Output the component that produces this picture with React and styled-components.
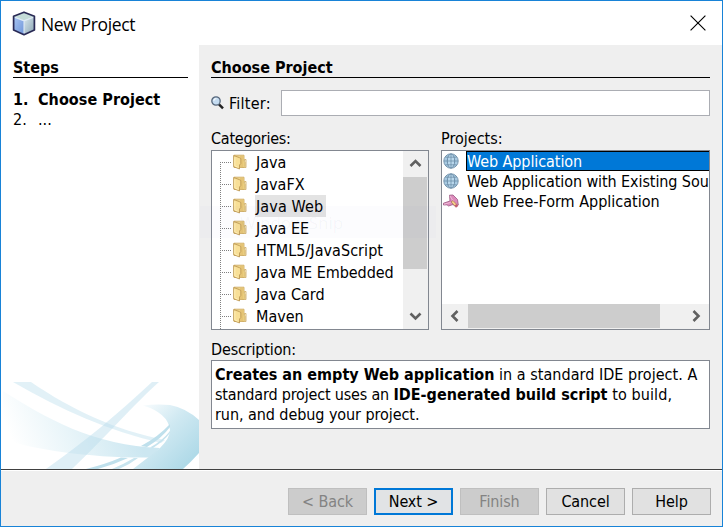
import React from "react";
import styled, { createGlobalStyle, css } from "styled-components";

const GlobalStyle = createGlobalStyle`
  *, *::before, *::after { box-sizing: border-box; }
  body { margin: 0; overflow: hidden; }
`;

const Window = styled.div`
  position: relative;
  display: flex;
  flex-direction: column;
  width: 723px;
  height: 527px;
  border: 1px solid #1883d7;
  background: #efefef;
  color: #000;
  font: 16px/20px "DejaVu Sans Condensed", "DejaVu Sans", sans-serif;
  white-space: nowrap;
`;

const TitleBar = styled.header`
  display: flex;
  align-items: center;
  flex: 0 0 44px;
  padding: 0 16px 0 11px;
  background: #fff;
`;

const Title = styled.h1`
  flex: 1;
  margin: 2px 0 0 5px;
  font: 400 17.5px/24px "Open Sans", "Noto Sans", sans-serif;
  letter-spacing: -0.38px;
`;

const CloseButton = styled.button`
  display: flex;
  padding: 0;
  border: 0;
  background: none;
`;

const Body = styled.div`
  display: flex;
  flex: 0 0 424px;
`;

const StepsPanel = styled.aside`
  display: flex;
  flex-direction: column;
  justify-content: space-between;
  width: 198px;
  padding-top: 12px;
  background: #fff;
`;

const Heading = styled.h2`
  height: 21px;
  margin: 0;
  border-bottom: 1px solid #000;
  font-size: 16px;
  line-height: 22px;
`;

const StepsTop = styled.div`
  margin: 0 11px 0 12px;
`;

const StepList = styled.ol`
  margin: 12px 0 0;
  padding: 0;
  list-style: none;
`;

const Step = styled.li`
  display: grid;
  grid-template-columns: 25px 1fr;
  font-weight: ${(p) => (p.$current ? 700 : 400)};
  letter-spacing: ${(p) => (p.$current ? "0.05px" : "0")};
`;

const SwirlArt = styled.svg`
  display: block;
`;

const Content = styled.main`
  display: flex;
  flex-direction: column;
  flex: 1;
  padding: 12px 12px 0;
`;

const FilterRow = styled.div`
  display: flex;
  align-items: center;
  height: 26px;
  margin-top: 12px;
`;

const FilterLabel = styled.label`
  width: 52px;
  margin-left: 5px;
  line-height: 18px;
  padding-top: 2px;
  letter-spacing: 0.25px;
`;

const FilterInput = styled.input`
  flex: 1;
  min-width: 0;
  height: 26px;
  border: 1px solid #abadb3;
  border-radius: 0;
  background: #fff;
  font: inherit;
`;

const Lists = styled.div`
  display: grid;
  grid-template-columns: 218px 269px;
  column-gap: 12px;
  margin-top: 12px;
`;

const FieldLabel = styled.div`
  height: 22px;
  line-height: 22px;
  letter-spacing: ${(p) => p.$spacing || "0"};
`;

const Box = styled.div`
  display: flex;
  height: 180px;
  overflow: hidden;
  border: 1px solid #828790;
  background: #fff;
  flex-direction: ${(p) => (p.$column ? "column" : "row")};
`;

const Tree = styled.ul`
  position: relative;
  flex: 1;
  margin: 0;
  padding: 0 0 0 8px;
  list-style: none;

  &::before {
    content: "";
    position: absolute;
    left: 8px;
    top: 11px;
    bottom: 0;
    width: 1px;
    background: repeating-linear-gradient(#808080 0 1px, transparent 1px 2px);
  }
`;

const TreeItem = styled.li`
  display: flex;
  align-items: center;
  height: 22px;

  &::before {
    content: "";
    width: 11px;
    height: 1px;
    margin-right: 2px;
    background: repeating-linear-gradient(90deg, #808080 0 1px, transparent 1px 2px);
  }
`;

const TreeLabel = styled.span`
  height: 22px;
  margin-left: 8px;
  padding: 0 3px 0 1px;
  line-height: 24px;
  letter-spacing: ${(p) => p.$spacing || "0"};
  background: ${(p) => (p.$selected ? "#e3e3e3" : "transparent")};
`;

const ScrollTrack = styled.div`
  display: flex;
  align-items: center;
  background: #f0f0f0;
  ${(p) =>
    p.$horizontal
      ? css`
          height: 25px;
          padding-bottom: 1px;
        `
      : css`
          flex-direction: column;
          width: 25px;
          padding-right: 1px;
        `}
`;

const ScrollArrow = styled.span`
  display: flex;
  align-items: center;
  justify-content: center;
  flex: 0 0 26px;
  width: 26px;
`;

const ScrollThumb = styled.span`
  background: #cdcdcd;
  ${(p) =>
    p.$horizontal
      ? css`
          width: 192px;
          height: 24px;
          margin-right: auto;
        `
      : css`
          width: 24px;
          height: 92px;
          margin-bottom: auto;
        `}
`;

const ProjectList = styled.ul`
  flex: 1;
  margin: 0;
  padding: 0;
  list-style: none;
`;

const ProjectItem = styled.li`
  display: flex;
  align-items: center;
  height: 20px;
  padding-left: 1px;
`;

const ProjectLabel = styled.span`
  flex: 1;
  height: 20px;
  margin-left: 7px;
  padding-left: 1px;
  line-height: 22px;
  letter-spacing: ${(p) => p.$spacing};
  ${(p) =>
    p.$selected &&
    css`
      border: 1px solid #000;
      border-right: 0;
      padding-left: 0;
      line-height: 20px;
      background: #0078d7;
      color: #fff;
    `}
`;

const DescriptionLabel = styled(FieldLabel)`
  margin-top: 9px;
  height: 21px;
  line-height: 22px;
`;

const Description = styled.p`
  height: 69px;
  margin: 0;
  padding: 4px 3px 0;
  border: 1px solid #828790;
  background: #fff;
`;

const Line = styled.span`
  display: block;
`;

const Run = styled.span`
  letter-spacing: ${(p) => p.$spacing};
`;

const Footer = styled.footer`
  display: flex;
  flex: 1;
  align-items: flex-start;
  justify-content: flex-end;
  gap: 7px;
  padding: 17px 11px 0;
  border-top: 1px solid #404040;
  box-shadow: inset 0 1px #fff;
`;

const variants = {
  normal: css`
    border: 1px solid #adadad;
    background: #e1e1e1;
    color: #000;
  `,
  primary: css`
    border: 2px solid #0078d7;
    background: #e1e3e5;
    color: #000;
  `,
  disabled: css`
    border: 1px solid #bfbfbf;
    background: #cccccc;
    color: #838383;
  `,
};

const Button = styled.button`
  display: flex;
  align-items: center;
  justify-content: center;
  width: 79px;
  height: 27px;
  margin-top: 1px;
  padding: 0;
  border-radius: 0;
  font: inherit;
  letter-spacing: -0.1px;
  ${(p) => variants[p.$variant]}
`;

const SnipGhost = styled.div`
  position: absolute;
  left: 199px;
  top: 205px;
  width: 236px;
  height: 32px;
  padding-left: 40px;
  background: rgba(90, 120, 200, 0.018);
  color: rgba(40, 70, 120, 0.045);
  font: 17px/34px "Open Sans", sans-serif;
  pointer-events: none;
`;

const CubeIcon = () => (
  <svg width="24" height="25" viewBox="0 0 24 25">
    <defs>
      <linearGradient id="cubeL" x1="0" y1="0" x2="1" y2="1">
        <stop offset="0" stopColor="#a9c6f3" />
        <stop offset="1" stopColor="#6f95d8" />
      </linearGradient>
      <linearGradient id="cubeR" x1="0" y1="0" x2="1" y2="1">
        <stop offset="0" stopColor="#d9e8ee" />
        <stop offset="1" stopColor="#8ba5b4" />
      </linearGradient>
    </defs>
    <path d="M1.7 5.5 12 9.5V23.3L1.7 19Z" fill="url(#cubeL)" />
    <path d="M22.3 5.5 12 9.5V23.3L22.3 19Z" fill="url(#cubeR)" />
    <path d="M12 1.5 22.3 5.5 12 9.5 1.7 5.5Z" fill="#c4dcd8" />
    <path d="M2.5 6.2 12 9.8 21.5 6.2M12 9.8V22.5" fill="none" stroke="#dfeaf6" strokeWidth="1.1" />
    <path d="M12 1.2 22.4 5.2V19L12 23.7 1.6 19V5.2Z" fill="none" stroke="#292a55" strokeWidth="1.7" strokeLinejoin="round" />
  </svg>
);

const CloseIcon = () => (
  <svg width="16" height="16" viewBox="0 0 16 16">
    <path d="M.6.6 15.4 15.4M15.4.6.6 15.4" stroke="#000" strokeWidth="1.15" />
  </svg>
);

const SearchIcon = () => (
  <svg width="13" height="14" viewBox="0 0 13 14">
    <path d="m8 8.3 4 4" stroke="#222" strokeWidth="2.5" />
    <circle cx="5" cy="5" r="4.2" fill="#c5dcf1" stroke="#56677b" strokeWidth="1.3" />
    <path d="M2.8 4.9A2.2 2.2 0 0 1 5.4 2.7" stroke="#fff" fill="none" />
  </svg>
);

const FolderIcon = () => (
  <svg width="14" height="16" viewBox="0 0 14 16">
    <path d="M9.500 6.500h2v-1h1.500v8h-4" fill="#fdf3d6" stroke="#d3b272" strokeWidth=".9" />
    <path d="M1 1.200h10v6l1 1v4.300l-1 1H1Z" fill="#efd68a" stroke="#cfae66" strokeWidth=".9" />
    <path d="M7 1.700h3.500v11.300H7Z" fill="#e5c476" />
    <path d="M.7 1.500 6.300 3.600 7.800 4.500V9.500L6.500 11v4L.7 12.700Z" fill="#f8df96" stroke="#b8924e" strokeWidth=".8" />
    <path d="M1.800 3.200v8.700l2.800 1.200" stroke="#fff0b8" fill="none" />
  </svg>
);

const GlobeIcon = () => (
  <svg width="16" height="16" viewBox="0 0 16 16">
    <circle cx="8" cy="8" r="7.2" fill="#a9cbe3" stroke="#7896ad" />
    <ellipse cx="8" cy="8" rx="3.7" ry="7" fill="#b9d7eb" stroke="#6889a5" strokeWidth=".9" />
    <path d="M1 8h14M8 1v14M2.5 4.2h11M2.5 11.800h11" stroke="#6889a5" strokeWidth=".7" />
  </svg>
);

const FreeFormIcon = () => (
  <svg width="16" height="16" viewBox="0 0 16 16">
    <path d="M6.500 2.200 10 2l4.500 4.500.8 5.500-2.300 1.500-3-2-4.500 1.500L4 11.800.5 12v-1.800L7 8Z" fill="#dc8abb" stroke="#98577f" strokeWidth=".8" />
    <path d="m7 3 3.500 5.500M1 11.200 7.500 9.500" stroke="#f0bcd9" fill="none" />
    <path d="m8 8.800 4.800 5.400 2-1.700L10 7.600Z" fill="#f6cf86" stroke="#96654f" strokeWidth=".6" />
    <path d="m11.500 12.600 1.700 1.900 1.900-1.500-1.700-1.900Z" fill="#c45c72" />
  </svg>
);

const chevrons = {
  up: "M1.5 8 6.5 3 11.5 8",
  down: "M1.5 3.5 6.5 8.5 11.5 3.5",
  left: "M8.5 1 3.5 6 8.5 11",
  right: "M3.5 1 8.5 6 3.5 11",
};

const Chevron = ({ dir }) => (
  <svg width="13" height="12" viewBox="0 0 13 12">
    <path d={chevrons[dir]} fill="none" stroke="#606060" strokeWidth="2.6" />
  </svg>
);

const Swirl = () => (
  <SwirlArt width="198" height="87" viewBox="1 382 198 87">
    <defs>
      <linearGradient id="band" x1="12" y1="440" x2="120" y2="395" gradientUnits="userSpaceOnUse">
        <stop offset="0" stopColor="#fff" />
        <stop offset=".45" stopColor="#e9f5f9" />
        <stop offset="1" stopColor="#cce7f1" />
      </linearGradient>
      <linearGradient id="hook" x1="145" y1="405" x2="195" y2="455" gradientUnits="userSpaceOnUse">
        <stop offset="0" stopColor="#f6fbfd" />
        <stop offset=".45" stopColor="#d0e9f2" />
        <stop offset="1" stopColor="#b0dae8" />
      </linearGradient>
    </defs>
    <path d="M3 391C45 418 95 446 160 448L150 457.500C90 458 35 450 3 439Z" fill="url(#band)" />
    <path d="M13 382H31C72 410 115 430 165 440L161 443C108 431 62 410 13 382Z" fill="#cfe7f2" fillOpacity=".6" />
    <path d="M152 382H159C134 404 106 437 72 469H46C83 443 119 413 152 382Z" fill="#b9dcec" fillOpacity=".45" />
    <path d="M143 405.500Q156 404 170 405Q186 408 199 420V453Q191 462 183 469H133L148 457.500L160 448Q170 438 170 430Q168 413 143 405.500Z" fill="url(#hook)" />
    <path d="M170 424Q158 437 141 446L147 447Q162 438 170 427Z" fill="#bfe0ec" />
    <path d="M170 431Q162 441 150 447.500L153 448Q164 441 170 433Z" fill="#c7e4ef" />
    <path d="M86 469Q106 464 121 457.500L128 458Q113 465 98 469Z" fill="#bfe0ec" />
    <path d="M112 469Q124 464 134 458L138 458Q129 465 119 469Z" fill="#c9e5ef" />
  </SwirlArt>
);

const categories = [
  { name: "Java" },
  { name: "JavaFX" },
  { name: "Java Web", selected: true, spacing: "0.12px" },
  { name: "Java EE" },
  { name: "HTML5/JavaScript", spacing: "0.05px" },
  { name: "Java ME Embedded", spacing: "-0.05px" },
  { name: "Java Card" },
  { name: "Maven" },
];

const projects = [
  { name: "Web Application", Icon: GlobeIcon, selected: true, spacing: "-0.08px" },
  { name: "Web Application with Existing Sou", Icon: GlobeIcon, spacing: "-0.09px" },
  { name: "Web Free-Form Application", Icon: FreeFormIcon, spacing: "0" },
];

const buttons = [
  { label: "< Back", variant: "disabled" },
  { label: "Next >", variant: "primary" },
  { label: "Finish", variant: "disabled" },
  { label: "Cancel", variant: "normal" },
  { label: "Help", variant: "normal" },
];

export default function App() {
  return (
    <>
      <GlobalStyle />
      <Window>
        <TitleBar>
          <CubeIcon />
          <Title>New Project</Title>
          <CloseButton aria-label="Close">
            <CloseIcon />
          </CloseButton>
        </TitleBar>
        <Body>
          <StepsPanel>
            <StepsTop>
              <Heading>Steps</Heading>
              <StepList>
                <Step $current>
                  <span>1.</span>
                  <span>Choose Project</span>
                </Step>
                <Step>
                  <span>2.</span>
                  <span>...</span>
                </Step>
              </StepList>
            </StepsTop>
            <Swirl />
          </StepsPanel>
          <Content>
            <Heading>Choose Project</Heading>
            <FilterRow>
              <SearchIcon />
              <FilterLabel htmlFor="filter">Filter:</FilterLabel>
              <FilterInput id="filter" />
            </FilterRow>
            <Lists>
              <div>
                <FieldLabel $spacing="-0.25px">Categories:</FieldLabel>
                <Box>
                  <Tree>
                    {categories.map((c) => (
                      <TreeItem key={c.name}>
                        <FolderIcon />
                        <TreeLabel $selected={c.selected} $spacing={c.spacing}>
                          {c.name}
                        </TreeLabel>
                      </TreeItem>
                    ))}
                  </Tree>
                  <ScrollTrack>
                    <ScrollArrow>
                      <Chevron dir="up" />
                    </ScrollArrow>
                    <ScrollThumb />
                    <ScrollArrow>
                      <Chevron dir="down" />
                    </ScrollArrow>
                  </ScrollTrack>
                </Box>
              </div>
              <div>
                <FieldLabel>Projects:</FieldLabel>
                <Box $column>
                  <ProjectList>
                    {projects.map(({ name, Icon, selected, spacing }) => (
                      <ProjectItem key={name}>
                        <Icon />
                        <ProjectLabel $selected={selected} $spacing={spacing}>
                          {name}
                        </ProjectLabel>
                      </ProjectItem>
                    ))}
                  </ProjectList>
                  <ScrollTrack $horizontal>
                    <ScrollArrow>
                      <Chevron dir="left" />
                    </ScrollArrow>
                    <ScrollThumb $horizontal />
                    <ScrollArrow>
                      <Chevron dir="right" />
                    </ScrollArrow>
                  </ScrollTrack>
                </Box>
              </div>
            </Lists>
            <DescriptionLabel $spacing="-0.15px">Description:</DescriptionLabel>
            <Description>
              <Line>
                <b>Creates an empty Web application</b>
                <Run $spacing="0.03px"> in a standard IDE project. A</Run>
              </Line>
              <Line>
                <Run $spacing="-0.18px">standard project uses an </Run>
                <b>IDE-generated build script</b>
                <Run $spacing="0.1px"> to build,</Run>
              </Line>
              <Line>
                <Run $spacing="-0.07px">run, and debug your project.</Run>
              </Line>
            </Description>
          </Content>
        </Body>
        <Footer>
          {buttons.map((b) => (
            <Button key={b.label} $variant={b.variant} disabled={b.variant === "disabled"}>
              {b.label}
            </Button>
          ))}
        </Footer>
        <SnipGhost aria-hidden="true">Window Snip</SnipGhost>
      </Window>
    </>
  );
}
